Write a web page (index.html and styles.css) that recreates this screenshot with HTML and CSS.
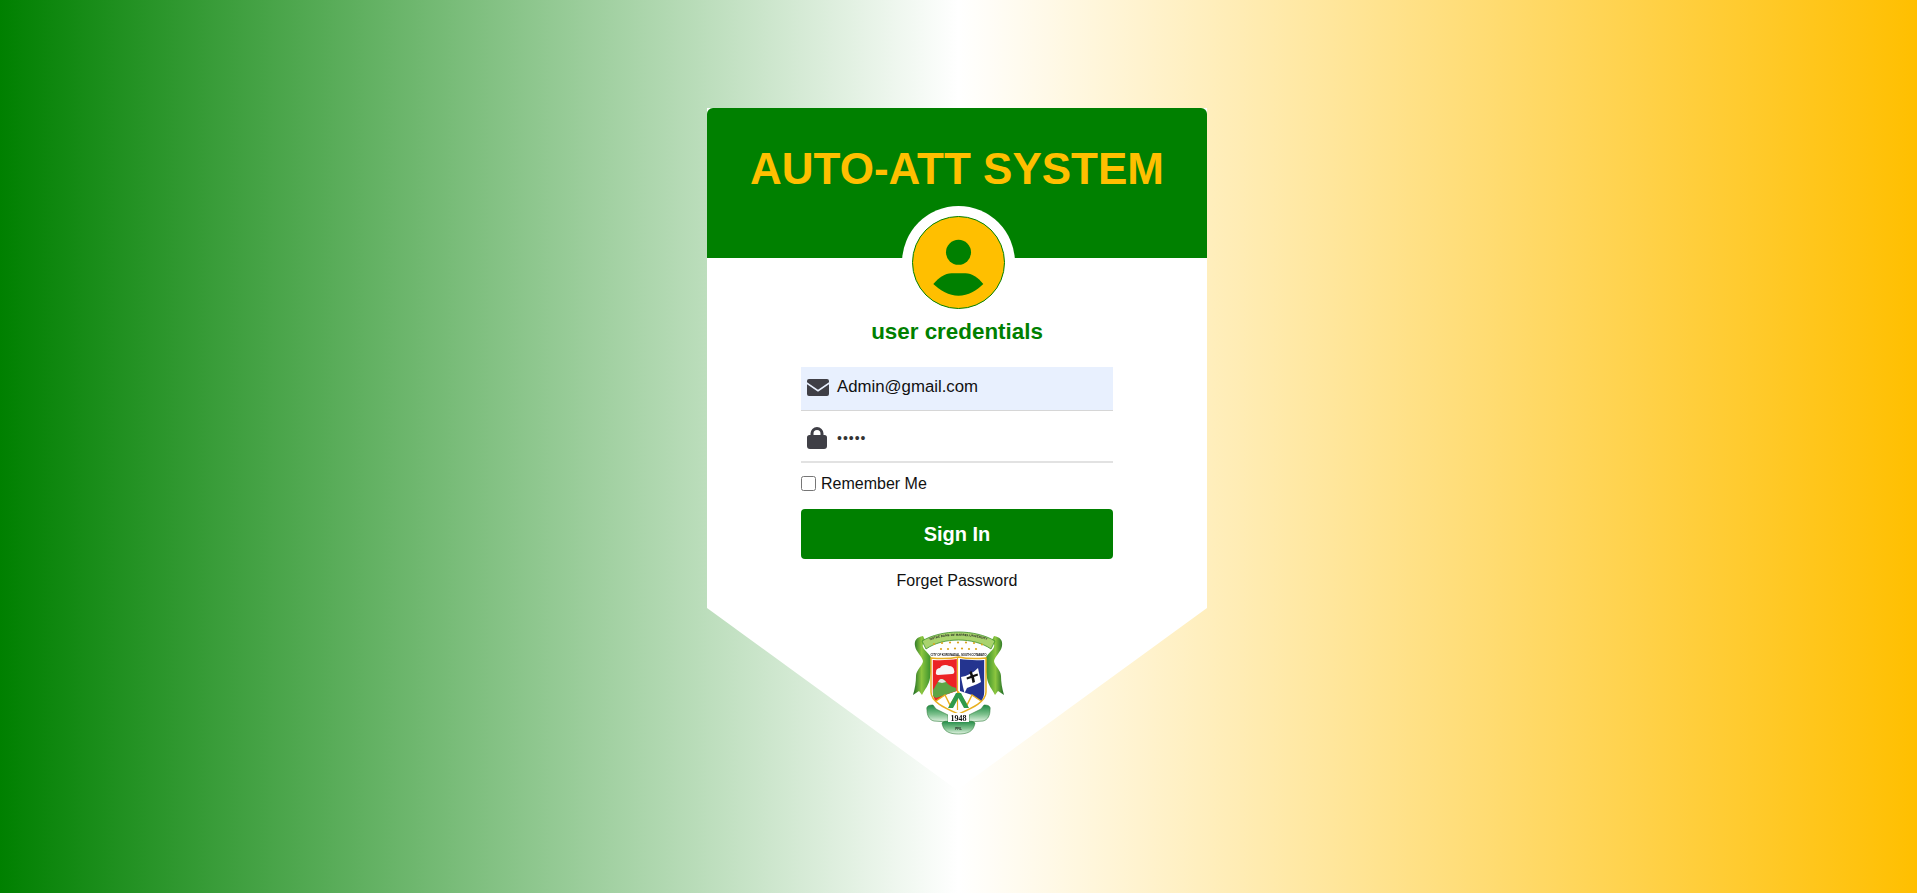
FILE: index.html
```html
<!DOCTYPE html>
<html>
    <head>
        <meta charset="UTF-8">
        <title>AUTO-ATT SYSTEM</title>
        <link rel="stylesheet" href="styles.css">
    </head>
    <body>
        <div class="loginCard">
            <div class="cardHead">
                <h1>AUTO-ATT SYSTEM</h1>
            </div>
            <div class="cardBody">
                <div class="avatarRing">
                    <div class="avatar">
                        <svg viewBox="0 0 91 91" width="91" height="91">
                            <circle cx="45.500" cy="35.300" r="12.500" fill="#008000"/>
                            <path d="M20.300 67 C26 60.500 32 56.300 38.500 56.300 L52.500 56.300 C59 56.300 65 60.500 70.300 67 C64 73.500 55 78.700 45.500 78.700 C36 78.700 27 73.500 20.300 67 Z" fill="#008000"/>
                        </svg>
                    </div>
                </div>
                <h2>user credentials</h2>
                <form class="loginForm">
                    <div class="field filled">
                        <div class="iconBox">
                            <svg viewBox="0 0 22 17" width="22" height="17">
                                <path d="M2 0 H20 A2 2 0 0 1 22 2 V3.200 L11 10.800 L0 3.200 V2 A2 2 0 0 1 2 0 Z M0 5.200 L11 12.800 L22 5.200 V15 A2 2 0 0 1 20 17 H2 A2 2 0 0 1 0 15 Z" fill="#3f3f46"/>
                            </svg>
                        </div>
                        <span>Admin@gmail.com</span>
                    </div>
                    <div class="field">
                        <div class="iconBox">
                            <svg viewBox="0 0 20 22" width="20" height="22">
                                <path d="M3.500 8 V6.500 A6.500 6.500 0 0 1 16.500 6.500 V8 H17.500 A2.500 2.500 0 0 1 20 10.500 V19 A3 3 0 0 1 17 22 H3 A3 3 0 0 1 0 19 V10.500 A2.500 2.500 0 0 1 2.500 8 Z M6.500 8 H13.500 V6.500 A3.500 3.500 0 0 0 6.500 6.500 Z" fill="#3f3f46" fill-rule="evenodd"/>
                            </svg>
                        </div>
                        <span class="dots">•••••</span>
                    </div>
                    <label class="remember"><input type="checkbox"> Remember Me</label>
                    <button type="button">Sign In</button>
                    <a class="forgot">Forget Password</a>
                </form>
                <svg class="crest" viewBox="0 0 93 105" width="93" height="105">
                    <defs>
                        <linearGradient id="ribbon" x1="0" y1="0" x2="1" y2="0">
                            <stop offset="0" stop-color="#1c6a24"/>
                            <stop offset=".45" stop-color="#8cc63f"/>
                            <stop offset="1" stop-color="#2f8a2a"/>
                        </linearGradient>
                        <linearGradient id="scroll" x1="0" y1="0" x2="0" y2="1">
                            <stop offset="0" stop-color="#1f8a45"/>
                            <stop offset=".55" stop-color="#7cc08c"/>
                            <stop offset="1" stop-color="#e4f3e4"/>
                        </linearGradient>
                        <path id="bannerArc" d="M13 12.500 C30 3.500 63 3.500 80 12.500"/>
                        <path id="ribbonSide" d="M11 6 C5 7 2 10 3 16 C4 22 10 26 11 31 C11 35 4 40 4 46 C4 52 3 58 1 65 L7 61 L10 65 C13 59 17 55 18 48 C19 42 20 36 20 31 C20 25 12 21 11 17 C10 14 12 13 14 12 Z" fill="url(#ribbon)"/>
                    </defs>
                    <use href="#ribbonSide"/>
                    <use href="#ribbonSide" transform="translate(93,0) scale(-1,1)"/>
                    <path d="M10 11 C30 -1 63 -1 83 11 L79 19 C62 7 31 7 14 19 Z" fill="#a9d36e" stroke="#3d8f2a" stroke-width=".8"/>
                    <text class="crestText"><textPath href="#bannerArc" startOffset="50%" text-anchor="middle">NOTRE DAME OF MARBEL UNIVERSITY</textPath></text>
                    <g fill="#d9a520">
                        <circle cx="22" cy="14" r="1.100"/><circle cx="30" cy="13" r="1.100"/><circle cx="38" cy="12.500" r="1.100"/><circle cx="46" cy="12.500" r="1.100"/><circle cx="54" cy="12.500" r="1.100"/><circle cx="62" cy="13" r="1.100"/><circle cx="70" cy="14.500" r="1.100"/>
                        <circle cx="29" cy="19" r="1.100"/><circle cx="36" cy="19" r="1.100"/><circle cx="43" cy="18.500" r="1.100"/><circle cx="50" cy="18.500" r="1.100"/><circle cx="57" cy="19" r="1.100"/><circle cx="64" cy="19" r="1.100"/>
                    </g>
                    <text x="46.500" y="26" class="crestText" text-anchor="middle" textLength="56">CITY OF KORONADAL, SOUTH COTABATO</text>
                    <path d="M19 28 C29 29 40 28.500 46.500 27 C53 28.500 64 29 74 28 V62 C74 72 60 78 46.500 84 C33 78 19 72 19 62 Z" fill="#fff" stroke="#e8b020" stroke-width="1.500"/>
                    <path d="M45.500 28 V80" stroke="#e8b020" stroke-width="1.200"/>
                    <path d="M20.800 30 C30 30.500 39 30 44.800 29 V61 L33 65 L24 71 C21.500 68 20.800 65 20.800 62 Z" fill="#ec2224"/>
                    <path d="M48 29 C54 30 63 30.500 72.200 30 V62 C72.200 65 71.500 68 69 71 L60 65 L48 61 Z" fill="#24348f"/>
                    <path d="M24 42 C24 39 26 38 28 38 C29 35 34 34 37 36 C40 36 42 38 42 40 C43 42 42 44 40 44 L26 45 C24 45 23.500 43 24 42 Z" fill="#f6f6f6"/>
                    <path d="M21 60 C24 56 26 50 29 49 C33 49 34 52 36 54 C38 56 41 57 44 58 L44 61 L33 65 L24 68 L21 66 Z" fill="#5da545"/>
                    <path d="M26 52 C27 50 28 49 29 49 C32 49 33 51 34 52 L30 53 Z" fill="#e6e6e6"/>
                    <path d="M49 47 C55 46 61 43 66 38 L69 52 C64 55 59 56 55 58 L52.500 63 L51 57 Z" fill="#fff"/>
                    <path d="M59.500 41 L61 45 L65.500 43.500 L66 45.500 L62 47 L63 52 L60.500 53 L59.500 48 L55 49.500 L54.500 47.500 L58.500 46 L57.500 42 Z" fill="#111"/>
                    <path d="M24 71 L33 65 L38 75 L46.500 62 L55 75 L60 65 L69 71" fill="none" stroke="#e8b020" stroke-width="1.500"/>
                    <path d="M36 78 L44 63 H49 L57 78 L52 78 L46.500 68 L41 78 Z" fill="#2f9a4a"/>
                    <path d="M15 80 C14 76 17 75 21 75 L24 79 L36 85 V92 L22 91 C17 90 15 85 15 80 Z" fill="url(#scroll)" stroke="#2f7d3a" stroke-width=".6"/>
                    <path d="M78 80 C79 76 76 75 72 75 L69 79 L57 85 V92 L71 91 C76 90 78 85 78 80 Z" fill="url(#scroll)" stroke="#2f7d3a" stroke-width=".6"/>
                    <path d="M30 93 C33 90 36 92 38 91 L55 91 C57 92 60 90 63 93 C62 98 60 104 46.500 104 C33 104 31 98 30 93 Z" fill="url(#scroll)" stroke="#2f7d3a" stroke-width=".6"/>
                    <rect x="36" y="83" width="21" height="9" fill="#fff"/>
                    <text x="46.500" y="90.500" class="crestYear" text-anchor="middle">1948</text>
                    <text x="46.500" y="99.500" class="crestText" text-anchor="middle">PFIL</text>
                </svg>
            </div>
        </div>
    </body>
</html>
```

FILE: styles.css
```css
* { box-sizing: border-box; }

html, body {
    margin: 0;
    height: 100%;
    font-family: "Liberation Sans", Arial, sans-serif; }

body {
    background: linear-gradient(to right, #008000, #fff, #ffbf00);
    display: flex;
    justify-content: center;
    align-items: flex-start;
    padding: 108px 3px 0 0;
    overflow: hidden; }

.loginCard {
    width: 500px;
    height: 682px;
    background: #fff;
    clip-path: polygon(0 0, 100% 0, 100% 500px, 50% 100%, 0 500px); }

.cardHead {
    height: 150px;
    background: #008000;
    border-radius: 6px 6px 0 0;
    padding-top: 35px;
    text-align: center; }
.cardHead h1 {
    margin: 0;
    font-size: 44px;
    line-height: 52px;
    color: #ffbf00; }

.cardBody {
    display: flex;
    flex-direction: column;
    align-items: center; }

.avatarRing {
    width: 113px;
    height: 113px;
    margin: -52px 0 0 3px;
    padding: 10px;
    border-radius: 50%;
    background: #fff; }
.avatar {
    width: 93px;
    height: 93px;
    border-radius: 50%;
    border: 1px solid #008000;
    background: #ffbf00; }
.avatar svg { display: block; }

.cardBody h2 {
    margin: 0;
    font-size: 22.4px;
    line-height: 26px;
    color: #008000; }

.loginForm {
    width: 312px;
    margin-top: 22px;
    display: flex;
    flex-direction: column; }

.field {
    height: 44px;
    display: flex;
    align-items: center;
    padding: 0 0 3px 6px;
    font-size: 16.8px;
    color: #111;
    border-bottom: 1px solid #d6d6d6; }
.field.filled { background: #e8f0fe; }
.field + .field {
    height: 52px;
    padding: 4px 0 0 6px;
    border-bottom: 2px solid #e2e2e2; }
.iconBox {
    flex: none;
    width: 30px;
    display: flex; }
.dots {
    font-size: 14px;
    letter-spacing: 1px;
    color: #333; }

.remember {
    height: 46px;
    padding-bottom: 5px;
    display: flex;
    align-items: center;
    gap: 5px;
    font-size: 16px;
    color: #111; }
.remember input {
    width: 15px;
    height: 15px;
    margin: 0; }

button {
    height: 50px;
    background: #008000;
    color: #fff;
    border: none;
    border-radius: 4px;
    font-family: inherit;
    font-size: 20px;
    font-weight: bold; }

.forgot {
    margin-top: 12px;
    line-height: 20px;
    text-align: center;
    font-size: 16px;
    color: #111; }

.crest {
    display: block;
    flex: none;
    margin: 39px 0 0 3px;
    filter: blur(.35px); }
.crestText {
    font-size: 3px;
    font-weight: bold;
    fill: #222; }
.crestYear {
    font-family: "Liberation Serif", serif;
    font-size: 8px;
    font-weight: bold;
    fill: #111; }
```
